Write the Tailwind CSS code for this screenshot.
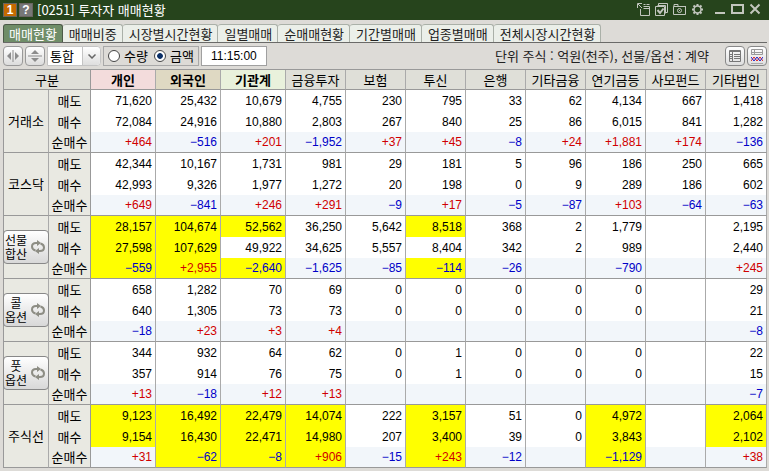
<!DOCTYPE html>
<html lang="ko">
<head>
  <meta charset="UTF-8" />
  <meta name="viewport" content="width=device-width, initial-scale=1" />
  <title>[0251] 투자자 매매현황</title>
  <script src="https://cdn.jsdelivr.net/npm/@tailwindcss/browser@4"></script>
</head>
<body class="min-h-screen bg-[#dddbd7] font-['Noto_Sans_CJK_KR',sans-serif] text-[13px] leading-[18px] text-black">

  <!-- title bar -->
  <header class="flex h-5 items-center bg-[#26441c] pl-1 pr-2 text-white">
    <span class="flex h-3 w-3 items-center justify-center bg-[#c46a00] font-['Liberation_Sans',sans-serif] text-[12px] font-bold leading-none outline outline-[#6a6560]">1</span>
    <button aria-label="도움말" class="ml-1 flex h-3 w-3 items-center justify-center bg-[#777] font-['Liberation_Sans',sans-serif] text-[12px] font-bold leading-none outline outline-[#6a6560]">?</button>
    <h1 class="ml-[5px]">[0251] 투자자 매매현황</h1>
    <div class="ml-auto flex items-center gap-[5px] text-[#c2c6be]">
      <button aria-label="창 이동">
        <svg class="h-[14px] w-[13px]" viewBox="0 0 13 14" fill="none" stroke="currentColor"><path d="M.5 5V.5H5M1 1l4 4M3.500 6v6.500h9v-9h-6M6.500 1.500h2m1 0h3M6.500 5.500h6"/></svg>
      </button>
      <button aria-label="화면 복사">
        <svg class="h-[14px] w-[13px]" viewBox="0 0 13 14" fill="none" stroke="currentColor"><path d="M3.500 3V.5h9v9H10M.5 3.500h9v9h-9zM2.500 2.500h8v8"/><path stroke-width="2" d="M2.500 7L5 10l3.500-4.500"/></svg>
      </button>
      <button aria-label="화면 캡처">
        <svg class="h-[14px] w-[13px]" viewBox="0 0 13 14" fill="none" stroke="currentColor"><path d="M.5 3.500h12v8H.5zM1 1.500h4v2H1zM5 3.500h8"/><circle cx="6.500" cy="7.500" r="2"/><path d="M6 7.500h1"/></svg>
      </button>
      <button aria-label="설정">
        <svg class="h-[14px] w-[13px]" viewBox="0 0 13 14" fill="none" stroke="currentColor"><circle cx="6.500" cy="6.500" r="3.500" stroke-width="1.500"/><path stroke-width="2" d="M6.500 1v2M6.500 10v2M1 6.500h2M10 6.500h2M2.500 2.500l1.500 1.500M9 9l1.500 1.500M2.500 10.500L4 9M9 4l1.500-1.500"/></svg>
      </button>
      <button aria-label="최소화" class="ml-[5px]">
        <svg class="h-[14px] w-3" viewBox="0 0 12 14" fill="none" stroke="currentColor" stroke-width="2"><path d="M1 10h10"/></svg>
      </button>
      <button aria-label="최대화">
        <svg class="h-[14px] w-[13px]" viewBox="0 0 13 14" fill="none" stroke="currentColor" stroke-width="2"><path d="M1 2h11v8H1z"/></svg>
      </button>
      <button aria-label="닫기">
        <svg class="h-[14px] w-3" viewBox="0 0 12 14" fill="none" stroke="currentColor" stroke-width="2"><path d="M1.500 1.500l9 9M10.500 1.500l-9 9"/></svg>
      </button>
    </div>
  </header>

  <!-- tabs -->
  <nav class="ml-[3px] mr-[2px] flex border-b border-[#6a6a68] pt-1 text-[#222]">
    <button class="h-[18px] rounded-t-[3px] border border-b-0 border-[#4c5a48] bg-[#6f8d68] px-[5px] leading-[17px] text-white">매매현황</button>
    <button class="h-[18px] rounded-t-[3px] border border-b-0 border-l-0 border-[#aab0a8] bg-[#ebefe9] pl-[6px] pr-[5px] leading-[17px]">매매비중</button>
    <button class="h-[18px] rounded-t-[3px] border border-b-0 border-l-0 border-[#aab0a8] bg-[#ebefe9] pl-[6px] pr-[5px] leading-[17px]">시장별시간현황</button>
    <button class="h-[18px] rounded-t-[3px] border border-b-0 border-l-0 border-[#aab0a8] bg-[#ebefe9] pl-[6px] pr-[5px] leading-[17px]">일별매매</button>
    <button class="h-[18px] rounded-t-[3px] border border-b-0 border-l-0 border-[#aab0a8] bg-[#ebefe9] pl-[6px] pr-[5px] leading-[17px]">순매매현황</button>
    <button class="h-[18px] rounded-t-[3px] border border-b-0 border-l-0 border-[#aab0a8] bg-[#ebefe9] pl-[6px] pr-[5px] leading-[17px]">기간별매매</button>
    <button class="h-[18px] rounded-t-[3px] border border-b-0 border-l-0 border-[#aab0a8] bg-[#ebefe9] pl-[6px] pr-[5px] leading-[17px]">업종별매매</button>
    <button class="h-[18px] rounded-t-[3px] border border-b-0 border-l-0 border-[#aab0a8] bg-[#ebefe9] pl-[6px] pr-[5px] leading-[17px]">전체시장시간현황</button>
  </nav>

  <!-- toolbar -->
  <div class="flex h-[26px] items-center gap-[2px] pl-[3px] pr-[2px]">
    <button aria-label="좌우 확장" class="flex h-5 w-5 items-center justify-center rounded border border-[#999] bg-linear-to-b from-white to-[#dcdcdc]">
      <svg class="h-3 w-4" viewBox="0 0 16 12" fill="#8c8c8c"><path d="M6 2v8L2 6zM10 2v8l4-4zM7.500 0h1v12h-1z"/></svg>
    </button>
    <button aria-label="상하 확장" class="flex h-5 w-5 items-center justify-center rounded border border-[#999] bg-linear-to-b from-white to-[#dcdcdc]">
      <svg class="h-4 w-4" viewBox="0 0 16 16" fill="#8c8c8c"><path d="M4 6h8L8 2zM4 10h8l-4 4zM1 7.500h14v1H1z"/></svg>
    </button>
    <div class="relative">
      <select aria-label="시장 구분" class="block h-5 w-[54px] appearance-none rounded-r border border-[#c4c4c4] bg-white pl-[2px] leading-[18px]">
        <option>통합</option>
      </select>
      <span class="pointer-events-none absolute inset-y-px right-px flex w-[18px] items-center justify-center rounded-r border-l border-[#c4c4c4] bg-linear-to-b from-white to-[#dedede]">
        <svg class="h-[5px] w-2" viewBox="0 0 8 5" fill="none" stroke="#666" stroke-width="1.500"><path d="M.5.5L4 4 7.500.5"/></svg>
      </span>
    </div>
    <div class="flex h-5 items-center border border-[#a8a8a8] px-1">
      <label class="flex items-center gap-1">
        <input type="radio" name="unit" class="h-3 w-3 appearance-none rounded-full border border-[#444] bg-white bg-radial checked:from-[#0a2f66] checked:from-35% checked:to-white checked:to-45%">수량</label>
      <label class="ml-[6px] flex items-center gap-1">
        <input type="radio" name="unit" checked class="h-3 w-3 appearance-none rounded-full border border-[#444] bg-white bg-radial checked:from-[#0a2f66] checked:from-35% checked:to-white checked:to-45%">금액</label>
    </div>
    <input type="text" aria-label="시각" value="11:15:00" class="h-5 w-[66px] border border-[#a0a0a0] bg-white text-center font-['Liberation_Sans',sans-serif] text-[12px]">
    <p class="ml-auto mr-[14px] text-[#222]">단위 주식 : 억원(천주), 선물/옵션 : 계약</p>
    <button aria-label="표 보기" class="flex h-5 w-5 items-center justify-center rounded border border-[#888] bg-linear-to-b from-white to-[#dedede]">
      <svg class="h-3 w-3" viewBox="0 0 12 12" fill="none" stroke="#777"><path d="M.5.5h11v11H.5zM0 1.500h12M3.500 2v9M5 4.500h6M5 6.500h6M5 8.500h6M1 4.500h2M1 6.500h2M1 8.500h2"/></svg>
    </button>
    <button aria-label="차트 보기" class="flex h-5 w-5 items-center justify-center rounded border border-[#888] bg-linear-to-b from-white to-[#dedede]">
      <svg class="h-4 w-3" viewBox="0 0 12 16" fill="none"><path stroke="#999" d="M.5 1.500h11v5H.5zM.5 4.500h11M3.500 2v5"/><path stroke="#aaa" d="M0 15.500h12"/><path stroke="#d22" d="M0 13l3-4 3 4 3-4 3 4"/><path stroke="#22c" d="M0 9l3 4 3-4 3 4 3-4"/></svg>
    </button>
  </div>

  <main class="pl-[3px] pr-[2px] pb-[3px]">
    <table class="w-full table-fixed border-separate border-spacing-0 border-l border-t border-[#999]">
      <colgroup>
        <col class="w-[45px]"><col class="w-[42px]">
        <col class="w-[65px]"><col class="w-[65px]"><col class="w-[65px]">
        <col class="w-[60px]"><col class="w-[60px]"><col class="w-[60px]"><col class="w-[60px]">
        <col class="w-[60px]"><col class="w-[60px]"><col class="w-[60px]"><col class="w-[61px]">
      </colgroup>
      <thead>
        <tr id="head" class="h-5 bg-[#dfdfd8]"></tr>
      </thead>
      <tbody id="rows"></tbody>
    </table>
  </main>

  <script>
    const COLUMNS = ["개인", "외국인", "기관계", "금융투자", "보험", "투신", "은행", "기타금융", "연기금등", "사모펀드", "기타법인"];
    const SIDES = ["매도", "매수", "순매수"];

    // hot: highlighted column indexes for each of the three rows
    const MARKETS = [
      { name: "거래소", rows: [
        ["71,620", "25,432", "10,679", "4,755", "230", "795", "33", "62", "4,134", "667", "1,418"],
        ["72,084", "24,916", "10,880", "2,803", "267", "840", "25", "86", "6,015", "841", "1,282"],
        ["+464", "-516", "+201", "-1,952", "+37", "+45", "-8", "+24", "+1,881", "+174", "-136"]],
        hot: [[], [], []] },
      { name: "코스닥", rows: [
        ["42,344", "10,167", "1,731", "981", "29", "181", "5", "96", "186", "250", "665"],
        ["42,993", "9,326", "1,977", "1,272", "20", "198", "0", "9", "289", "186", "602"],
        ["+649", "-841", "+246", "+291", "-9", "+17", "-5", "-87", "+103", "-64", "-63"]],
        hot: [[], [], []] },
      { name: "선물<br>합산", button: true, rows: [
        ["28,157", "104,674", "52,562", "36,250", "5,642", "8,518", "368", "2", "1,779", "", "2,195"],
        ["27,598", "107,629", "49,922", "34,625", "5,557", "8,404", "342", "2", "989", "", "2,440"],
        ["-559", "+2,955", "-2,640", "-1,625", "-85", "-114", "-26", "", "-790", "", "+245"]],
        hot: [[0, 1, 2, 5], [0, 1], [0, 1, 2, 5]] },
      { name: "콜<br>옵션", button: true, rows: [
        ["658", "1,282", "70", "69", "0", "0", "0", "0", "0", "", "29"],
        ["640", "1,305", "73", "73", "0", "0", "0", "0", "0", "", "21"],
        ["-18", "+23", "+3", "+4", "", "", "", "", "", "", "-8"]],
        hot: [[], [], []] },
      { name: "풋<br>옵션", button: true, rows: [
        ["344", "932", "64", "62", "0", "1", "0", "0", "0", "", "22"],
        ["357", "914", "76", "75", "0", "1", "0", "0", "0", "", "15"],
        ["+13", "-18", "+12", "+13", "", "", "", "", "", "", "-7"]],
        hot: [[], [], []] },
      { name: "주식선", rows: [
        ["9,123", "16,492", "22,479", "14,074", "222", "3,157", "51", "0", "4,972", "", "2,064"],
        ["9,154", "16,430", "22,471", "14,980", "207", "3,400", "39", "0", "3,843", "", "2,102"],
        ["+31", "-62", "-8", "+906", "-15", "+243", "-12", "", "-1,129", "", "+38"]],
        hot: [[0, 1, 2, 3, 5, 8, 10], [0, 1, 2, 3, 5, 8, 10], [1, 2, 3, 5, 8]] },
    ];

    const HEAD_STYLE = ["bg-[#f3dcdc] font-bold", "bg-[#dfd9c3] font-bold", "bg-[#e9f1dc] font-bold"];

    document.getElementById("head").innerHTML =
      `<th colspan="2" class="border-b border-r border-[#999] p-0 font-normal">구분</th>` +
      COLUMNS.map((c, i) => `<th scope="col" class="border-b border-r border-[#999] border-r-[#aaa] p-0 ${HEAD_STYLE[i] || "font-normal"}">${c}</th>`).join("");

    function marketName(m) {
      if (!m.button) return m.name;
      return `
        <button class="-mx-px flex h-[34px] w-[46px] items-center justify-between rounded border border-[#888] bg-linear-to-b from-white to-[#d8d8d8] pl-px pr-[2px] text-[12px] leading-[14px]">
          <span>${m.name}</span>
          <svg class="h-4 w-4" viewBox="0 0 16 16" fill="none" stroke="#8d8d84" stroke-width="2"><path d="M5.500 11.500Q2 10.500 2 7.500 2 4 6 4h2M10.500 4.500Q14 5.500 14 8.500 14 12 10 12H8"/><path fill="#8d8d84" stroke="none" d="M7 1l4 3-4 3zM9 9l-4 3 4 3z"/></svg>
        </button>`;
    }

    function cellColor(value, side, hot) {
      const bg = hot ? "bg-[#ffff00]" : side === 2 ? "bg-[#f2f6fa]" : "bg-white";
      const text = side < 2 ? "text-black" : value.startsWith("+") ? "text-[#d00000]" : "text-[#0000c8]";
      return `${bg} ${text}`;
    }

    document.getElementById("rows").innerHTML = MARKETS.map(m => m.rows.map((row, side) => `
      <tr class="h-[21px]">
        ${side === 0 ? `<th rowspan="3" scope="rowgroup" class="border-b border-r border-[#999] border-r-[#aaa] bg-[#e9e9e2] p-0 font-normal">${marketName(m)}</th>` : ""}
        <th scope="row" class="border-r border-[#999] bg-[#e9e9e2] p-0 font-normal ${side === 2 ? "border-b" : ""}">${SIDES[side]}</th>
        ${row.map((v, i) => `<td class="border-r border-[#999] border-r-[#aaa] p-0 pr-[3px] text-right font-['Liberation_Sans',sans-serif] text-[12px] ${side === 2 ? "border-b" : ""} ${cellColor(v, side, m.hot[side].includes(i))}">${v.replace("-", "−")}</td>`).join("")}
      </tr>`).join("")).join("");
  </script>
</body>
</html>
